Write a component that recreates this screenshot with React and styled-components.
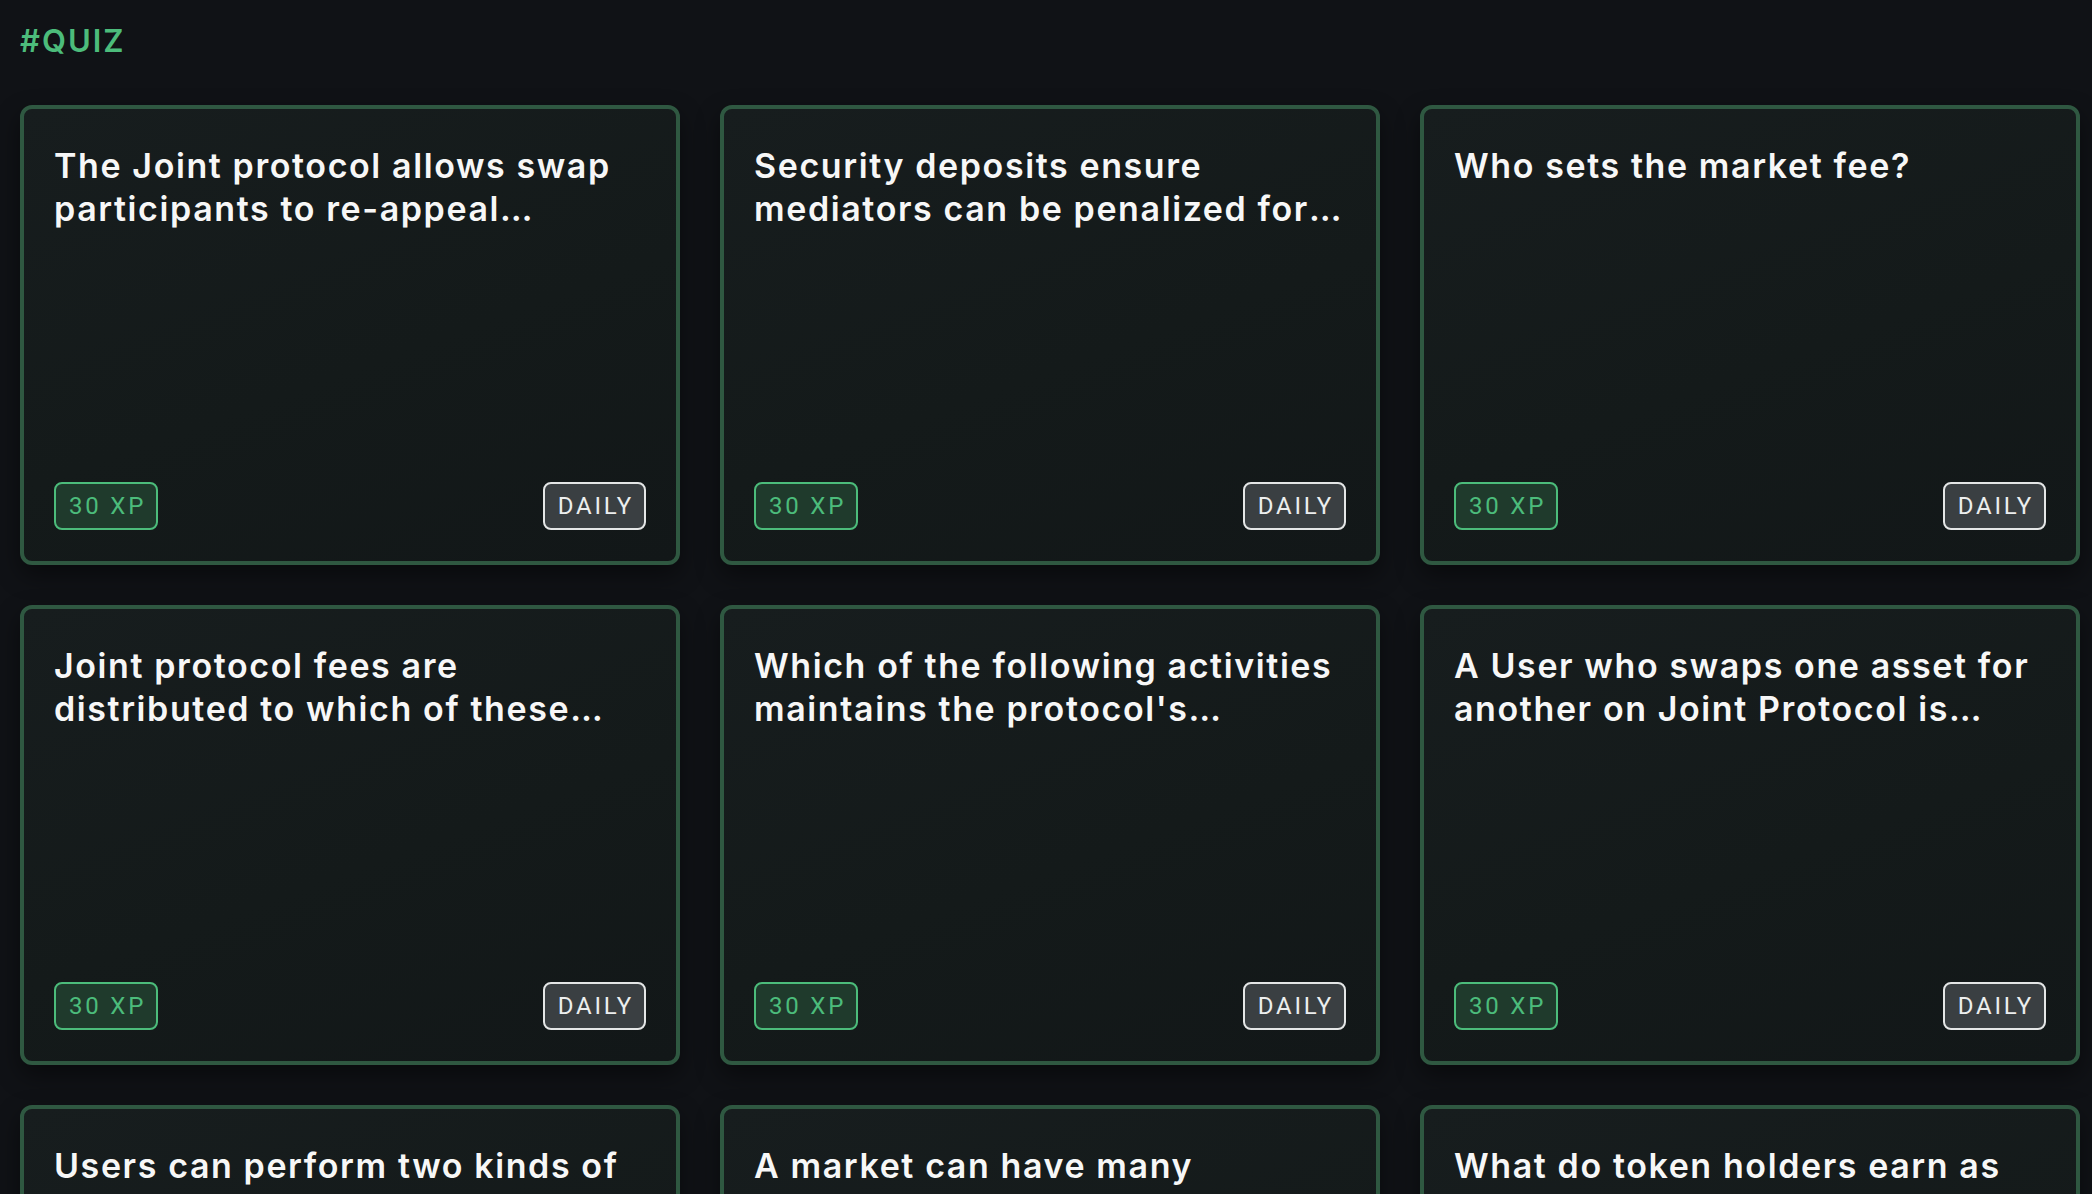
import React from "react";
import styled, { createGlobalStyle } from "styled-components";

const GlobalStyle = createGlobalStyle`
    * {
        box-sizing: border-box;
    }
    body {
        margin: 0;
        background: #101216;
        font-family: Inter, "Noto Sans", sans-serif;
    }
`;

const Page = styled.div`
    min-height: 100vh;
    padding: 21px 12px 40px 20px;
    background: #101216;
`;

const Heading = styled.h1`
    margin: 0 0 44px 0;
    font-size: 31px;
    line-height: 40px;
    font-weight: 600;
    letter-spacing: 2px;
    color: #4cbc7b;
`;

const QuizGrid = styled.div`
    display: grid;
    grid-template-columns: repeat(3, minmax(0, 1fr));
    grid-auto-rows: 460px;
    gap: 40px;
`;

const QuizCard = styled.div`
    display: flex;
    flex-direction: column;
    justify-content: space-between;
    padding: 35px 30px 31px 30px;
    border: 4px solid #2f5841;
    border-radius: 12px;
    background: linear-gradient(160deg, #171d1e 0%, #141a1a 55%, #121718 100%);
    box-shadow: 0 10px 24px rgba(0, 0, 0, 0.45);
`;

const QuizTitle = styled.h2`
    margin: 0;
    font-size: 34px;
    line-height: 43px;
    font-weight: 600;
    letter-spacing: 1.6px;
    color: #f7f7f7;
    display: -webkit-box;
    -webkit-line-clamp: 2;
    -webkit-box-orient: vertical;
    overflow: hidden;
`;

const CardFooter = styled.div`
    display: flex;
    justify-content: space-between;
    align-items: center;
`;

const Badge = styled.span`
    display: inline-flex;
    align-items: center;
    height: 48px;
    padding: 0 10px 0 13px;
    border: 2px solid ${(props) => (props.variant === "xp" ? "#4cbc7b" : "#e4e6e6")};
    border-radius: 8px;
    background: ${(props) => (props.variant === "xp" ? "#1f3a2c" : "#3a3f42")};
    color: ${(props) => (props.variant === "xp" ? "#4cbc7b" : "#eceeee")};
    font-family: Roboto, "Liberation Sans", sans-serif;
    font-size: 24px;
    font-weight: 400;
    letter-spacing: 2.8px;
`;

const quizzes = [
    "The Joint protocol allows swap participants to re-appeal decisions made by mediators. True or false?",
    "Security deposits ensure mediators can be penalized for dishonest resolutions.",
    "Who sets the market fee?",
    "Joint protocol fees are distributed to which of these groups?",
    "Which of the following activities maintains the protocol's security?",
    "A User who swaps one asset for another on Joint Protocol is called a...?",
    "Users can perform two kinds of swaps on Joint Protocol. Which are they?",
    "A market can have many mediators assigned to it.",
    "What do token holders earn as rewards for staking?",
];

export default function App() {
    return (
        <>
            <GlobalStyle />
            <Page>
                <Heading>#QUIZ</Heading>
                <QuizGrid>
                    {quizzes.map((question, idx) => (
                        <QuizCard key={idx}>
                            <QuizTitle>{question}</QuizTitle>
                            <CardFooter>
                                <Badge variant="xp">30 XP</Badge>
                                <Badge variant="daily">DAILY</Badge>
                            </CardFooter>
                        </QuizCard>
                    ))}
                </QuizGrid>
            </Page>
        </>
    );
}
